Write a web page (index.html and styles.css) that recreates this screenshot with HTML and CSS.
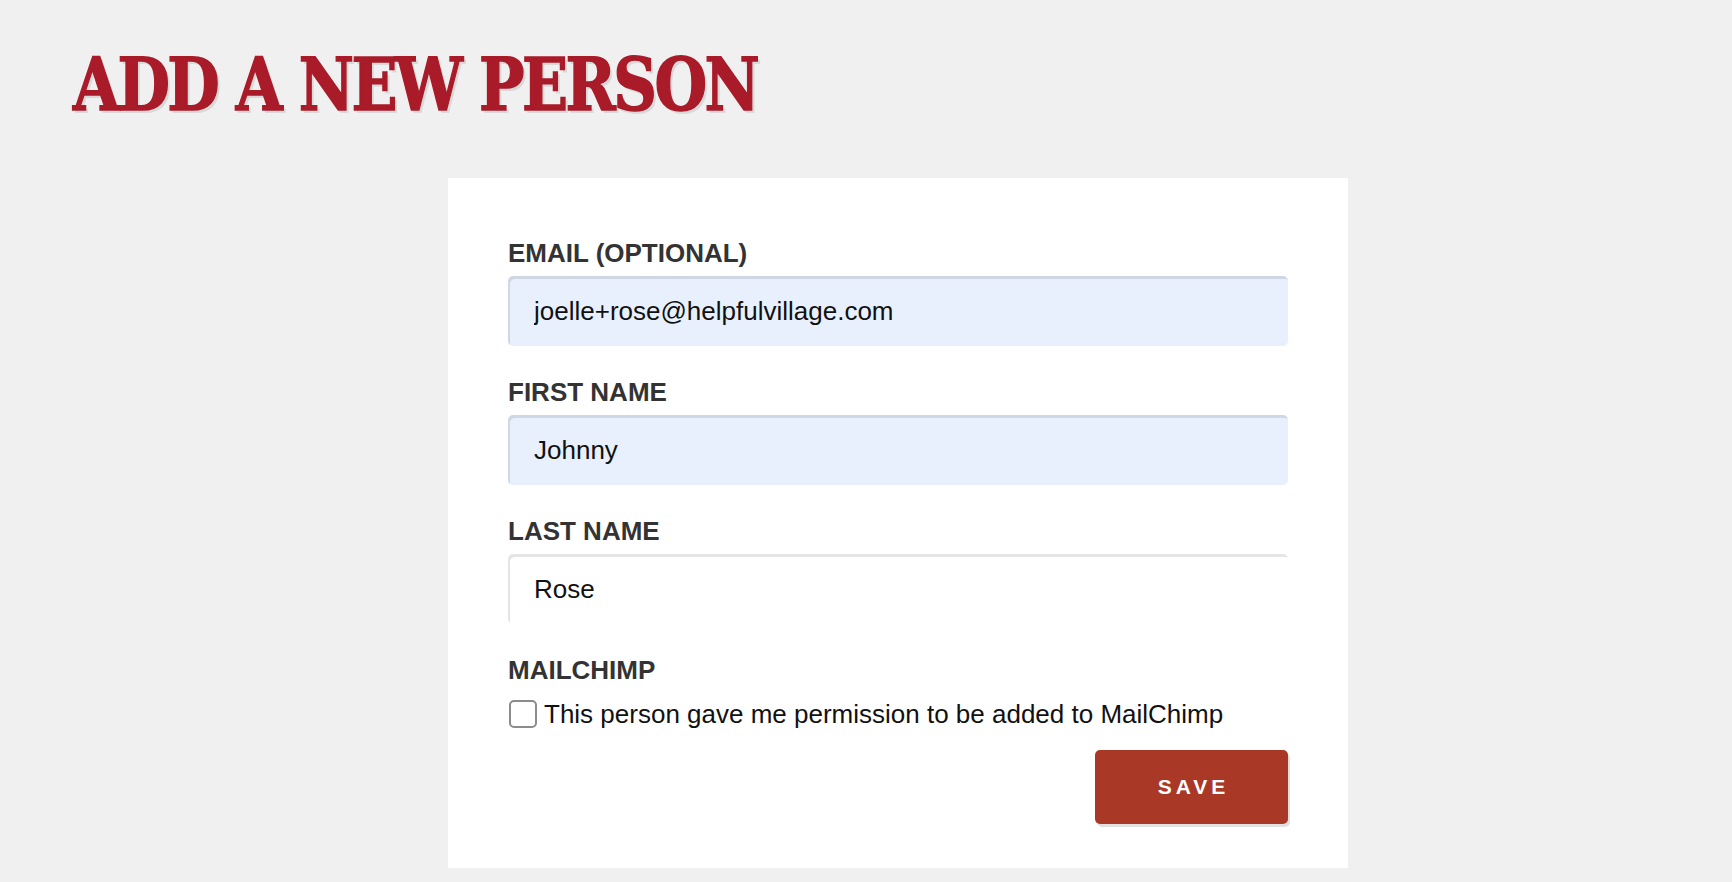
FILE: index.html
```html
<!DOCTYPE html>
<html lang="en">
<head>
    <meta charset="UTF-8">
    <meta name="viewport" content="width=device-width, initial-scale=1.0">
    <title>Add a new person</title>
    <link rel="stylesheet" href="styles.css">
</head>
<body>
    <div class="page">
        <h1 class="title">ADD A NEW PERSON</h1>

        <div class="card">
            <form id="personForm">
                <div class="form-group">
                    <label for="email">EMAIL (OPTIONAL)</label>
                    <input type="email" id="email" class="form-control filled" value="joelle+rose@helpfulvillage.com">
                </div>
                <div class="form-group">
                    <label for="firstName">FIRST NAME</label>
                    <input type="text" id="firstName" class="form-control filled" value="Johnny">
                </div>
                <div class="form-group">
                    <label for="lastName">LAST NAME</label>
                    <input type="text" id="lastName" class="form-control" value="Rose">
                </div>
                <div class="form-group checkbox-block">
                    <label for="mailchimp">MAILCHIMP</label>
                    <div class="checkbox-group">
                        <input type="checkbox" id="mailchimp" class="checkbox">
                        <span>This person gave me permission to be added to MailChimp</span>
                    </div>
                </div>
                <div class="actions">
                    <button type="submit" class="btn btn-save">SAVE</button>
                </div>
            </form>
        </div>
    </div>
</body>
</html>
```

FILE: styles.css
```css
* {
    box-sizing: border-box;
    margin: 0;
    padding: 0;
}

body {
    font-family: 'Liberation Sans', Arial, Helvetica, sans-serif;
    background-color: #f0f0f0;
    color: #333;
}

.page {
    padding-top: 45px;
}

.title {
    font-family: 'DejaVu Serif', Georgia, serif;
    font-weight: bold;
    font-size: 72px;
    line-height: 80px;
    letter-spacing: -3px;
    color: #a91b29;
    -webkit-text-stroke: 1.5px #a91b29;
    text-shadow: 3px 3px 0 #d9d9d9;
    margin-left: 73px;
    margin-bottom: 53px;
    /* the heading face is wider than the slab we want, squeeze it */
    transform: scaleX(0.84);
    transform-origin: left center;
}

.card {
    width: 900px;
    margin-left: 448px;
    background-color: white;
    padding: 60px 60px 44px;
}

.form-group {
    margin-bottom: 31px;
}

.form-group label {
    display: block;
    font-size: 26px;
    line-height: 30px;
    font-weight: bold;
    color: #333;
    margin-bottom: 8px;
}

.form-control {
    display: block;
    width: 100%;
    height: 70px;
    padding: 0 26px;
    border: none;
    border-radius: 5px;
    background-color: white;
    box-shadow: inset 2px 3px 0 rgba(0, 0, 0, 0.1);
    font-family: inherit;
    font-size: 26px;
    color: #111;
    outline: none;
}

.form-control.filled {
    background-color: #e8f0fe;
}

.checkbox-block {
    margin-bottom: 21px;
}

.checkbox-block label {
    margin-bottom: 14px;
}

.checkbox-group {
    display: flex;
    align-items: center;
    gap: 7px;
    font-size: 26px;
    line-height: 30px;
    color: #111;
}

.checkbox {
    appearance: none;
    width: 28px;
    height: 28px;
    border: 2px solid #8c8c8c;
    border-radius: 5px;
    background-color: white;
    margin-left: 1px;
}

.actions {
    display: flex;
    justify-content: flex-end;
}

.btn {
    border: none;
    cursor: pointer;
    font-family: inherit;
}

.btn-save {
    width: 193px;
    height: 74px;
    border-radius: 5px;
    background-color: #aa3826;
    color: white;
    font-size: 21px;
    font-weight: bold;
    letter-spacing: 4px;
    padding-left: 4px;
    box-shadow: 2px 3px 0 rgba(0, 0, 0, 0.12);
}

.btn-save:hover {
    background-color: #952f1f;
}
```
